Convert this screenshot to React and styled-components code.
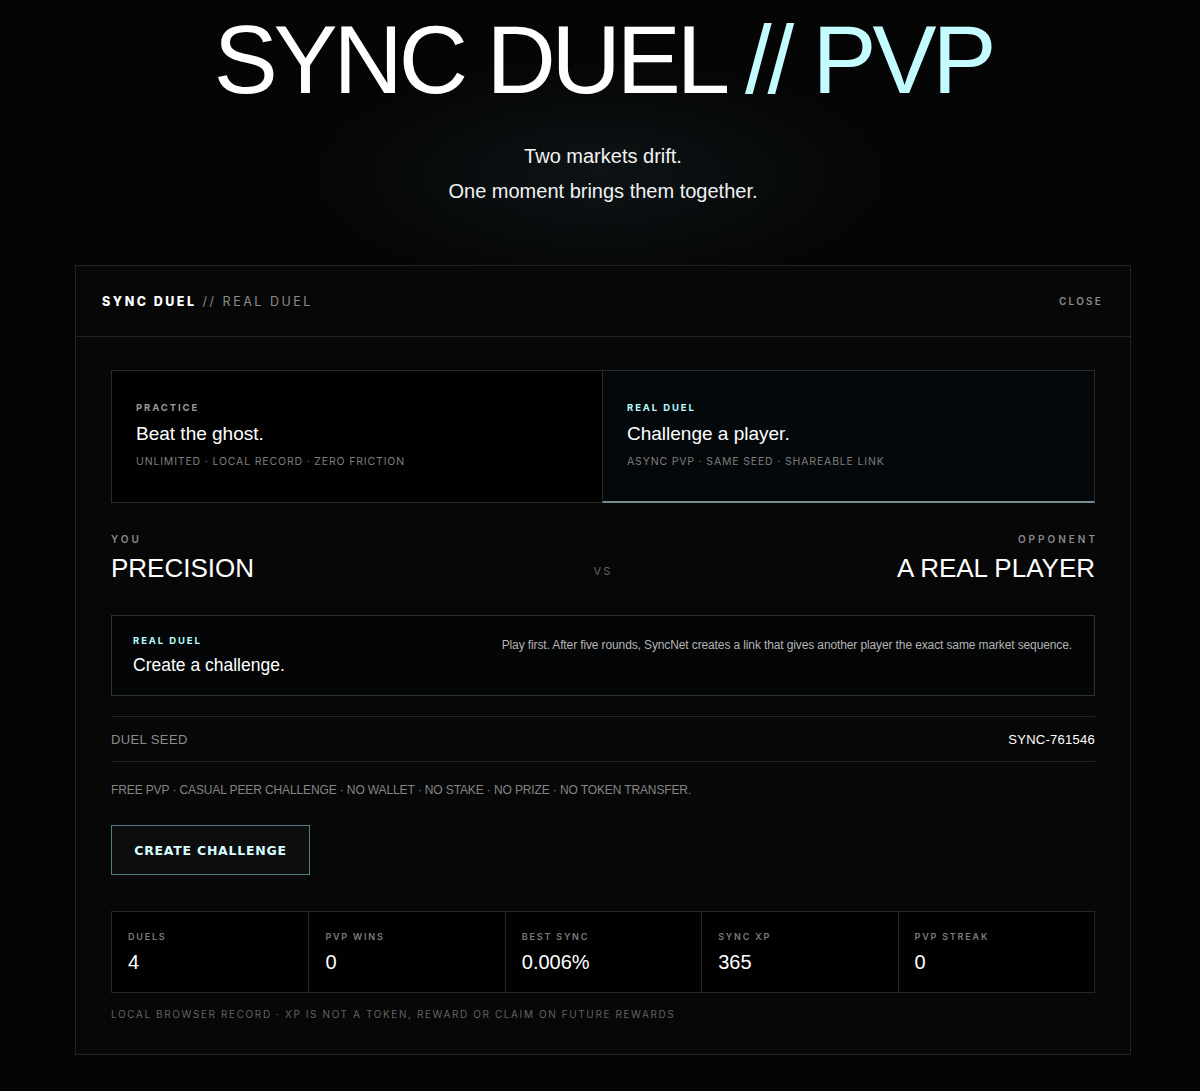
import React from "react";
import styled, { createGlobalStyle } from "styled-components";

const Global = createGlobalStyle`
  html, body { margin: 0; padding: 0; background: #050505; }
  body {
    font-family: "Liberation Sans", Arial, sans-serif;
    color: #fff;
    -webkit-font-smoothing: antialiased;
  }
  * { box-sizing: border-box; }
`;

const Page = styled.div`
  min-height: 1091px;
  background:
    radial-gradient(ellipse 420px 170px at 50% 175px, rgba(40, 70, 80, 0.22), rgba(0,0,0,0) 70%),
    #050505;
  display: flex;
  flex-direction: column;
  align-items: center;
  padding: 6px 0 0 6px;
`;

const Title = styled.h1`
  margin: 0;
  font-family: "Liberation Sans", Arial, sans-serif;
  font-weight: 400;
  font-size: 96px;
  line-height: 108px;
  letter-spacing: -0.043em;
  color: #fff;
`;

const Accent = styled.span`
  color: #c4fbff;
`;

const Tagline = styled.div`
  margin-top: 25px;
  display: flex;
  flex-direction: column;
  align-items: center;
  font-size: 20px;
  line-height: 35px;
  color: #f2f2f2;
`;

const Panel = styled.section`
  margin-top: 56px;
  width: 1056px;
  border: 1px solid #232323;
  background: #070707;
`;

const PanelHeader = styled.header`
  height: 71px;
  display: flex;
  align-items: center;
  justify-content: space-between;
  padding: 0 27px 0 26px;
  border-bottom: 1px solid #232323;
`;

const HeaderTitle = styled.div`
  font-family: Inter, "Liberation Sans", sans-serif;
  font-size: 12.5px;
  letter-spacing: 0.2em;
  color: #8c8c8c;
  strong { color: #fff; font-weight: 800; }
`;

const CloseButton = styled.button`
  background: none;
  border: none;
  padding: 0;
  font-family: Inter, "Liberation Sans", sans-serif;
  font-size: 10px;
  font-weight: 600;
  letter-spacing: 0.22em;
  color: #8a8a8a;
  cursor: pointer;
`;

const PanelBody = styled.div`
  padding: 33px 35px 34px 35px;
  display: flex;
  flex-direction: column;
`;

const Modes = styled.div`
  display: grid;
  grid-template-columns: 1fr 1fr;
  height: 133px;
`;

const ModeCard = styled.div`
  border: 1px solid #2a2a2a;
  border-bottom: ${(p) => (p.$active ? "2px solid #6f8d92" : "1px solid #2a2a2a")};
  background: ${(p) => (p.$active ? "#05080a" : "#010101")};
  padding: 31px 24px 0 24px;
  margin-left: ${(p) => (p.$active ? "-1px" : "0")};
`;

const Eyebrow = styled.div`
  font-family: Inter, "Liberation Sans", sans-serif;
  font-size: 9.5px;
  font-weight: 700;
  letter-spacing: 0.2em;
  line-height: 12px;
  color: ${(p) => (p.$accent ? "#b6fbff" : "#9a9a9a")};
`;

const ModeTitle = styled.div`
  margin-top: 8px;
  font-size: 19px;
  line-height: 24px;
  color: #fff;
`;

const ModeMeta = styled.div`
  margin-top: 9px;
  font-family: Inter, "Liberation Sans", sans-serif;
  font-size: 10.5px;
  letter-spacing: 0.08em;
  color: #7d7d7d;
`;

const Versus = styled.div`
  margin-top: 30px;
  display: grid;
  grid-template-columns: 1fr auto 1fr;
  align-items: end;
`;

const Side = styled.div`
  display: flex;
  flex-direction: column;
  align-items: ${(p) => (p.$right ? "flex-end" : "flex-start")};
`;

const SideLabel = styled.div`
  font-family: Inter, "Liberation Sans", sans-serif;
  font-size: 10px;
  font-weight: 600;
  letter-spacing: 0.3em;
  margin-right: ${(p) => (p.$right ? "-0.3em" : "0")};
  color: #8a8a8a;
`;

const SideName = styled.div`
  margin-top: 7px;
  font-size: 26px;
  line-height: 32px;
  color: #fff;
`;

const VsMark = styled.div`
  font-family: Inter, "Liberation Sans", sans-serif;
  font-size: 11px;
  letter-spacing: 0.2em;
  color: #666;
  padding-bottom: 6px;
`;

const Callout = styled.div`
  margin-top: 31px;
  height: 81px;
  border: 1px solid #2a3434;
  background: #030506;
  display: flex;
  justify-content: space-between;
  padding: 19px 22px 0 21px;
`;

const CalloutTitle = styled.div`
  margin-top: 7px;
  font-size: 17.5px;
  line-height: 22px;
  color: #fff;
`;

const CalloutText = styled.div`
  margin-top: 3px;
  font-size: 12px;
  letter-spacing: -0.01em;
  color: #b4b4b4;
`;

const SeedRow = styled.div`
  margin-top: 20px;
  height: 46px;
  border-top: 1px solid #242424;
  border-bottom: 1px solid #242424;
  display: flex;
  align-items: center;
  justify-content: space-between;
  font-size: 13px;
  letter-spacing: 0.02em;
`;

const SeedLabel = styled.span`
  color: #8c8c8c;
  letter-spacing: 0.03em;
`;

const SeedValue = styled.span`
  color: #fff;
`;

const Disclaimer = styled.div`
  margin-top: 21px;
  font-size: 12px;
  letter-spacing: -0.01em;
  color: #858585;
`;

const PrimaryButton = styled.button`
  margin-top: 28px;
  align-self: flex-start;
  width: 199px;
  height: 50px;
  border: 1px solid #4f7f85;
  background: #0d0d0d;
  font-family: "DejaVu Sans", Verdana, sans-serif;
  font-weight: 700;
  font-size: 12.5px;
  letter-spacing: 0.06em;
  color: #d8fdff;
  cursor: pointer;
`;

const Stats = styled.div`
  margin-top: 36px;
  display: grid;
  grid-template-columns: repeat(5, 1fr);
  border: 1px solid #262626;
  background: #010101;
  height: 82px;
`;

const Stat = styled.div`
  padding: 19px 16px 0 16px;
  border-left: ${(p) => (p.$first ? "none" : "1px solid #262626")};
`;

const StatLabel = styled.div`
  font-family: Inter, "Liberation Sans", sans-serif;
  font-size: 9px;
  font-weight: 600;
  letter-spacing: 0.2em;
  color: #7c7c7c;
`;

const StatValue = styled.div`
  margin-top: 8px;
  font-size: 20px;
  line-height: 24px;
  color: #fff;
`;

const FootNote = styled.div`
  margin-top: 15px;
  font-family: Inter, "Liberation Sans", sans-serif;
  font-size: 10px;
  letter-spacing: 0.16em;
  color: #626262;
`;

const stats = [
  ["DUELS", "4"],
  ["PVP WINS", "0"],
  ["BEST SYNC", "0.006%"],
  ["SYNC XP", "365"],
  ["PVP STREAK", "0"],
];

export default function App() {
  return (
    <>
      <Global />
      <Page>
        <Title>
          SYNC DUEL <Accent>// PVP</Accent>
        </Title>
        <Tagline>
          <span>Two markets drift.</span>
          <span>One moment brings them together.</span>
        </Tagline>

        <Panel>
          <PanelHeader>
            <HeaderTitle>
              <strong>SYNC DUEL</strong> // REAL DUEL
            </HeaderTitle>
            <CloseButton>CLOSE</CloseButton>
          </PanelHeader>

          <PanelBody>
            <Modes>
              <ModeCard>
                <Eyebrow>PRACTICE</Eyebrow>
                <ModeTitle>Beat the ghost.</ModeTitle>
                <ModeMeta>UNLIMITED · LOCAL RECORD · ZERO FRICTION</ModeMeta>
              </ModeCard>
              <ModeCard $active>
                <Eyebrow $accent>REAL DUEL</Eyebrow>
                <ModeTitle>Challenge a player.</ModeTitle>
                <ModeMeta>ASYNC PVP · SAME SEED · SHAREABLE LINK</ModeMeta>
              </ModeCard>
            </Modes>

            <Versus>
              <Side>
                <SideLabel>YOU</SideLabel>
                <SideName>PRECISION</SideName>
              </Side>
              <VsMark>VS</VsMark>
              <Side $right>
                <SideLabel $right>OPPONENT</SideLabel>
                <SideName>A REAL PLAYER</SideName>
              </Side>
            </Versus>

            <Callout>
              <div>
                <Eyebrow $accent>REAL DUEL</Eyebrow>
                <CalloutTitle>Create a challenge.</CalloutTitle>
              </div>
              <CalloutText>
                Play first. After five rounds, SyncNet creates a link that gives another player the exact same market sequence.
              </CalloutText>
            </Callout>

            <SeedRow>
              <SeedLabel>DUEL SEED</SeedLabel>
              <SeedValue>SYNC-761546</SeedValue>
            </SeedRow>

            <Disclaimer>
              FREE PVP · CASUAL PEER CHALLENGE · NO WALLET · NO STAKE · NO PRIZE · NO TOKEN TRANSFER.
            </Disclaimer>

            <PrimaryButton>CREATE CHALLENGE</PrimaryButton>

            <Stats>
              {stats.map(([label, value], i) => (
                <Stat key={label} $first={i === 0}>
                  <StatLabel>{label}</StatLabel>
                  <StatValue>{value}</StatValue>
                </Stat>
              ))}
            </Stats>

            <FootNote>
              LOCAL BROWSER RECORD · XP IS NOT A TOKEN, REWARD OR CLAIM ON FUTURE REWARDS
            </FootNote>
          </PanelBody>
        </Panel>
      </Page>
    </>
  );
}
